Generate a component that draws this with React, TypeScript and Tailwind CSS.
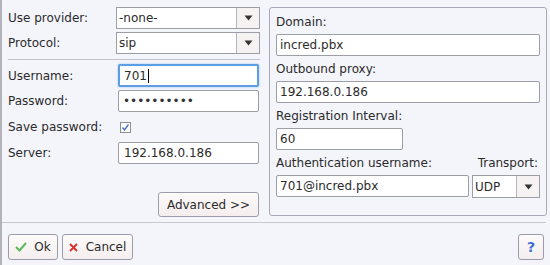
function Arrow() {
  return (
    <svg width="9" height="6" viewBox="0 0 9 6">
      <path d="M0.5 0.5 H8.5 L4.5 5.5 Z" fill="#333" />
    </svg>
  );
}

function Select({ value, className }: { value: string; className: string }) {
  return (
    <div className={`flex border border-[#9d9da6] bg-white ${className}`}>
      <div className="flex-1 flex items-center pl-[2px]">{value}</div>
      <div className="w-[23px] flex items-center justify-center border-l border-[#b6b6be] bg-[#f7f2f2]">
        <Arrow />
      </div>
    </div>
  );
}

function Field({ value, className }: { value: string; className: string }) {
  return (
    <div className={`flex items-center border border-[#9d9da6] bg-white rounded-[2px] ${className}`}>
      {value}
    </div>
  );
}

function Label({ children }: { children: string }) {
  return <div className="w-[108px] shrink-0">{children}</div>;
}

export default function App() {
  return (
    <div className="w-[550px] h-[265px] bg-[#f4f4fb] border-l-2 border-[#b2b2ba] font-['DejaVu_Sans',sans-serif] text-[12px] text-[#2b2b2b]">
      <div className="h-[222px] flex pt-[7px] pl-[6px]">
        {/* left column */}
        <div className="w-[252px] flex flex-col">
          <div className="flex items-center h-[22px]">
            <Label>Use provider:</Label>
            <Select value="-none-" className="w-[144px] h-[22px]" />
          </div>
          <div className="flex items-center h-[22px] mt-[3px]">
            <Label>Protocol:</Label>
            <Select value="sip" className="w-[144px] h-[22px]" />
          </div>
          <div className="h-px bg-[#c4c4cc] mt-[5px]" />
          <div className="flex items-center h-[23px] mt-[4px]">
            <Label>Username:</Label>
            <div className="ml-[2px] w-[141px] h-[23px] flex items-center pl-[4px] bg-white border-2 border-[#5d9de2] rounded-[2px] shadow-[0_0_2px_#8fbdf0]">
              701<span className="ml-px w-px h-[14px] bg-black" />
            </div>
          </div>
          <div className="flex items-center h-[22px] mt-[3px]">
            <Label>Password:</Label>
            <Field value="••••••••••" className="ml-[2px] w-[141px] h-[22px] pl-[4px] text-[#333]" />
          </div>
          <div className="flex items-center h-[18px] mt-[6px]">
            <Label>Save password:</Label>
            <div className="ml-[4px] w-[11px] h-[11px] border border-[#8e8e98] bg-white flex items-center justify-center">
              <svg width="9" height="9" viewBox="0 0 9 9">
                <path d="M1.5 4.5 L3.5 7 L7.5 1.5" fill="none" stroke="#3d6fc4" strokeWidth="1.3" />
              </svg>
            </div>
          </div>
          <div className="flex items-center h-[22px] mt-[6px]">
            <Label>Server:</Label>
            <Field value="192.168.0.186" className="ml-[2px] w-[141px] h-[22px] pl-[5px]" />
          </div>
          <div className="flex justify-end mt-[28px] pr-[1px]">
            <div className="w-[101px] h-[25px] flex items-center justify-center border border-[#9c9cac] rounded-[3px] bg-gradient-to-b from-[#fdfafa] to-[#f5eeee]">
              Advanced &gt;&gt;
            </div>
          </div>
        </div>

        {/* right panel */}
        <div className="ml-[9px] w-[278px] h-[209px] border border-[#a8a8b6] rounded-[3px] pl-[6px] pr-[6px] pt-px flex flex-col">
          <div className="h-[14px] leading-[14px] mt-[6px]">Domain:</div>
          <Field value="incred.pbx" className="mt-[5px] h-[22px] pl-[3px]" />
          <div className="h-[14px] leading-[14px] mt-[6px]">Outbound proxy:</div>
          <Field value="192.168.0.186" className="mt-[5px] h-[22px] pl-[3px]" />
          <div className="h-[14px] leading-[14px] mt-[6px]">Registration Interval:</div>
          <Field value="60" className="mt-[5px] w-[127px] h-[22px] pl-[3px]" />
          <div className="flex justify-between h-[14px] leading-[14px] mt-[6px] pr-[2px]">
            <span>Authentication username:</span>
            <span>Transport:</span>
          </div>
          <div className="flex mt-[5px] gap-[3px]">
            <Field value="701@incred.pbx" className="w-[193px] h-[22px] pl-[3px]" />
            <Select value="UDP" className="flex-1 h-[23px]" />
          </div>
        </div>
      </div>

      <div className="h-px bg-[#c8c8d0] mr-[4px]" />

      <div className="flex items-center mt-[11px] pl-[6px] pr-[6px]">
        <div className="w-[50px] h-[26px] flex items-center justify-center gap-[7px] border border-[#9c9cac] rounded-[3px] bg-gradient-to-b from-[#fdfafa] to-[#f5eeee]">
          <svg width="12" height="10" viewBox="0 0 12 10">
            <path d="M1 5 L4.5 8.5 L11 1" fill="none" stroke="#5cb85c" strokeWidth="2" />
          </svg>
          <span>Ok</span>
        </div>
        <div className="ml-[4px] w-[71px] h-[26px] flex items-center justify-center gap-[8px] border border-[#9c9cac] rounded-[3px] bg-gradient-to-b from-[#fdfafa] to-[#f5eeee]">
          <svg width="9" height="9" viewBox="0 0 9 9">
            <path d="M1 1 L8 8 M8 1 L1 8" fill="none" stroke="#d9302c" strokeWidth="1.8" />
          </svg>
          <span>Cancel</span>
        </div>
        <div className="ml-auto w-[26px] h-[26px] flex items-center justify-center border border-[#9c9cac] rounded-[3px] bg-gradient-to-b from-[#fdfafa] to-[#f5eeee] text-[#3d6fd6] font-bold text-[14px]">
          ?
        </div>
      </div>
    </div>
  );
}
